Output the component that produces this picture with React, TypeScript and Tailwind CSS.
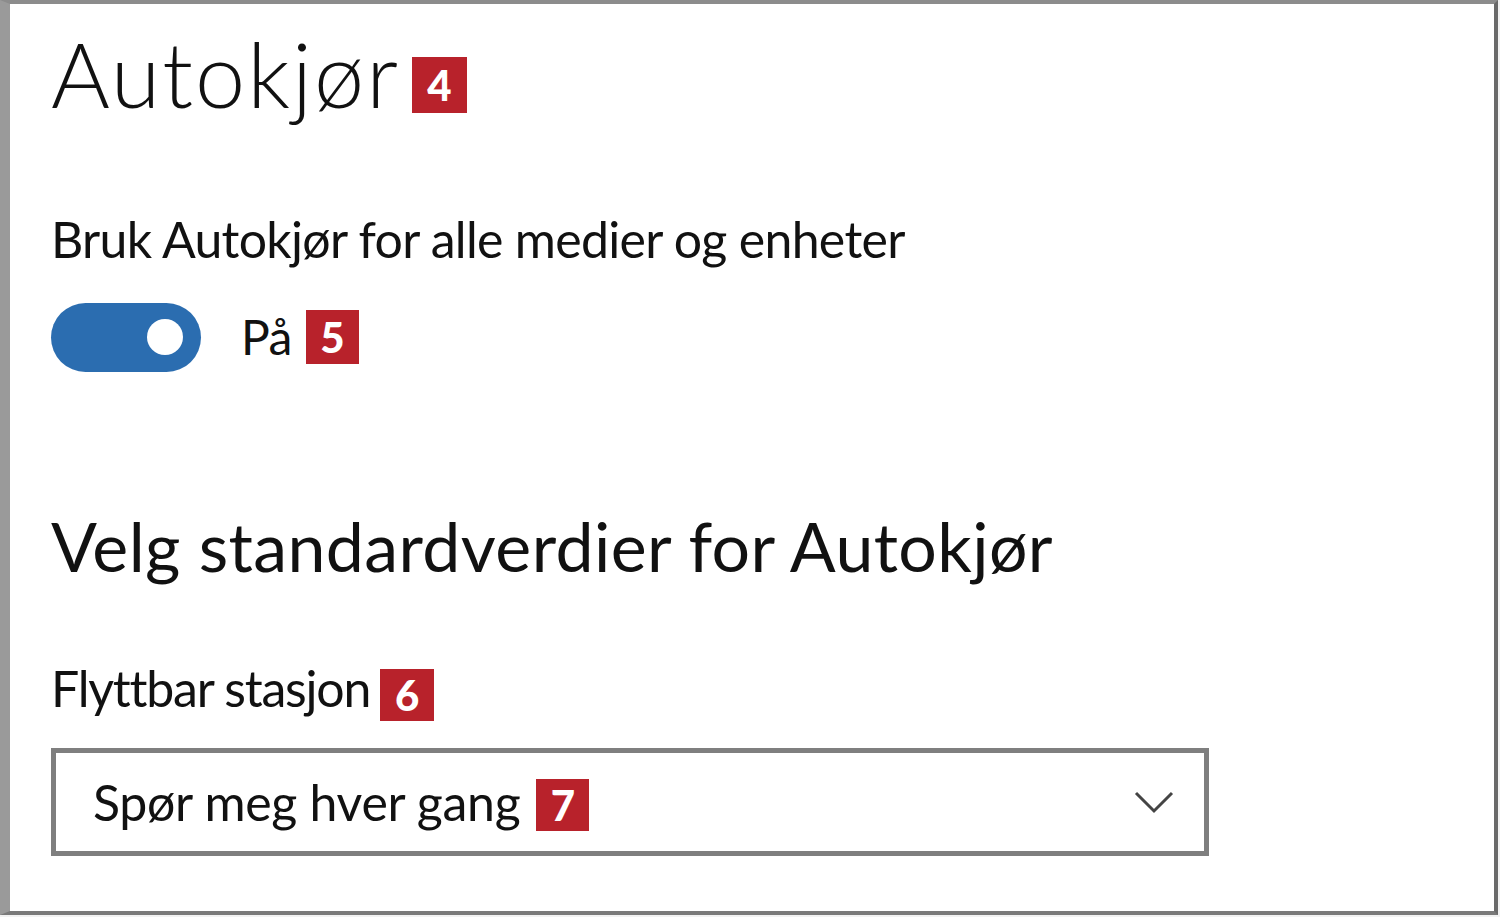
import React from 'react';

const Badge = ({ n, className = '' }: { n: number; className?: string }) => (
  <span
    className={`inline-flex items-center justify-center bg-[#b8222b] text-white font-black leading-none ${className}`}
    style={{ fontFamily: 'Lato, "Open Sans", sans-serif' }}
  >
    {n}
  </span>
);

const App: React.FC = () => {
  return (
    <div className="w-[1500px] h-[917px] bg-[#f2f2f2] overflow-hidden" style={{ fontFamily: 'Lato, "Noto Sans", sans-serif' }}>
      <div className="w-[1498px] h-[915px] bg-white border-t-4 border-r-4 border-b-4 border-l-[10px] border-t-[#8c8c8c] border-r-[#6a6a6a] border-b-[#7a7a7a] border-l-[#9a9a9a] pl-[41px] text-[#111]">
        {/* Autokjør */}
        <div className="flex items-center mt-[24px] h-[90px]">
          <h1 className="text-[90px] font-light leading-none tracking-[2px]">Autokjør</h1>
          <Badge n={4} className="ml-[12px] mt-[24px] w-[55px] h-[56px] text-[42px]" />
        </div>

        <p className="mt-[96px] text-[50px] leading-none tracking-[-0.7px]">Bruk Autokjør for alle medier og enheter</p>

        <div className="flex items-center mt-[38px] h-[70px]">
          <div className="w-[150px] h-[69px] rounded-full bg-[#2b6db0] flex items-center justify-end pr-[18px]">
            <div className="w-[36px] h-[36px] rounded-full bg-white" />
          </div>
          <span className="ml-[40px] text-[48px] leading-none tracking-[-0.5px]">På</span>
          <Badge n={5} className="ml-[14px] w-[53px] h-[54px] text-[42px]" />
        </div>

        <h2 className="mt-[140px] text-[68px] leading-none tracking-[0.4px]">Velg standardverdier for Autokjør</h2>

        <div className="flex items-center mt-[80px] h-[56px]">
          <span className="text-[50px] leading-none tracking-[-1.2px]">Flyttbar stasjon</span>
          <Badge n={6} className="ml-[10px] mt-[14px] w-[54px] h-[52px] text-[42px]" />
        </div>

        <div className="mt-[32px] w-[1158px] h-[108px] border-[5px] border-[#7f7f7f] flex items-center pl-[37px] pr-[30px]">
          <span className="text-[50px] leading-none tracking-[-0.3px]">Spør meg hver gang</span>
          <Badge n={7} className="ml-[16px] mt-[6px] w-[53px] h-[52px] text-[42px]" />
          <svg className="ml-auto" width="40" height="24" viewBox="0 0 40 24" fill="none">
            <path d="M2 3 L20 21 L38 3" stroke="#444" strokeWidth="3" />
          </svg>
        </div>
      </div>
    </div>
  );
};

export default App;
